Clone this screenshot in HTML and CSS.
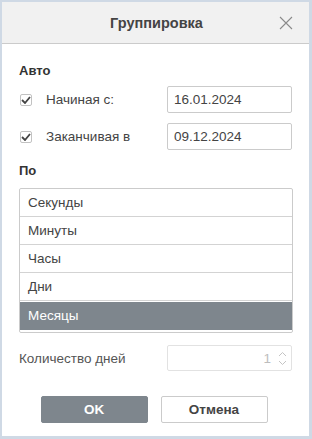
FILE: index.html
```html
<!DOCTYPE html>
<html lang="ru">
  <head>
    <meta charset="UTF-8" />
    <title>Группировка</title>
    <link rel="stylesheet" href="styles.css">
  </head>
  <body>
    <div class="dialog">
      <!-- Header -->
      <div class="dialog-header">
        <span class="dialog-title">Группировка</span>
        <span class="close-btn">
          <svg width="14" height="14" viewBox="0 0 14 14">
            <path d="M1 1 L13 13 M13 1 L1 13" stroke="#8a8a8a" stroke-width="1.1" fill="none" />
          </svg>
        </span>
      </div>

      <div class="dialog-body">
        <div class="section-title">Авто</div>

        <div class="field-row">
          <label class="check">
            <span class="checkbox">
              <svg width="10" height="8" viewBox="0 0 10 8">
                <path d="M1 4 L4 7 L9 1" stroke="#444" stroke-width="1.8" fill="none" />
              </svg>
            </span>
            Начиная с:
          </label>
          <input class="text-input" type="text" value="16.01.2024" />
        </div>

        <div class="field-row">
          <label class="check">
            <span class="checkbox">
              <svg width="10" height="8" viewBox="0 0 10 8">
                <path d="M1 4 L4 7 L9 1" stroke="#444" stroke-width="1.8" fill="none" />
              </svg>
            </span>
            Заканчивая в
          </label>
          <input class="text-input" type="text" value="09.12.2024" />
        </div>

        <div class="section-title by-title">По</div>

        <ul class="list">
          <li>Секунды</li>
          <li>Минуты</li>
          <li>Часы</li>
          <li>Дни</li>
          <li class="selected">Месяцы</li>
        </ul>

        <div class="field-row days-row">
          <span class="days-label">Количество дней</span>
          <div class="spinner">
            <span class="spinner-value">1</span>
            <span class="spinner-arrows">
              <svg width="9" height="6" viewBox="0 0 9 6">
                <path d="M1 5 L4.5 1.5 L8 5" stroke="#c4c4c4" stroke-width="1" fill="none" />
              </svg>
              <svg width="9" height="6" viewBox="0 0 9 6">
                <path d="M1 1 L4.5 4.5 L8 1" stroke="#c4c4c4" stroke-width="1" fill="none" />
              </svg>
            </span>
          </div>
        </div>

        <div class="buttons">
          <button class="btn btn-primary">OK</button>
          <button class="btn">Отмена</button>
        </div>
      </div>
    </div>
  </body>
</html>
```

FILE: styles.css
```css
/* Global Styles */
* {
  margin: 0;
  padding: 0;
  box-sizing: border-box;
}

body {
  font-family: "Liberation Sans", Arial, sans-serif;
  font-size: 13.5px;
  color: #444;
  background: #cfd9e5;
  width: 312px;
  height: 439px;
  padding: 2px 3px 3px 2px;
}

/* Dialog */
.dialog {
  background: white;
  width: 307px;
  height: 434px;
  display: flex;
  flex-direction: column;
}

.dialog-header {
  height: 42px;
  background: #f1f1f1;
  border-bottom: 1px solid #cbcbcb;
  display: flex;
  align-items: center;
  justify-content: center;
  position: relative;
}

.dialog-title {
  font-size: 14.5px;
  font-weight: bold;
  color: #444;
  margin-left: 2px;
}

.close-btn {
  position: absolute;
  right: 16px;
  top: 14px;
  display: flex;
}

.dialog-body {
  padding: 19px 17px 0 17px;
}

.section-title {
  font-weight: bold;
  font-size: 13px;
  color: #333;
  margin-bottom: 8px;
}

.by-title {
  margin-top: 13px;
  margin-bottom: 10px;
}

/* Rows */
.field-row {
  display: flex;
  align-items: center;
  justify-content: space-between;
  margin-bottom: 10px;
}

.check {
  display: flex;
  align-items: center;
  gap: 14px;
  padding-left: 1px;
}

.checkbox {
  width: 12px;
  height: 12px;
  border: 1px solid #c2c2c2;
  border-radius: 2px;
  display: flex;
  align-items: center;
  justify-content: center;
}

.text-input {
  width: 125px;
  height: 27px;
  border: 1px solid #cbcbcb;
  border-radius: 2px;
  padding: 0 6px;
  font-family: inherit;
  font-size: 13.5px;
  color: #444;
  outline: none;
}

/* List */
.list {
  list-style: none;
  border: 1px solid #cbcbcb;
  border-radius: 2px;
  width: 274px;
  padding-bottom: 2px;
  margin-bottom: 12px;
}

.list li {
  height: 28px;
  line-height: 27px;
  padding-left: 8px;
  border-bottom: 1px solid #d3d3d3;
}

.list li.selected {
  background: #7e868d;
  color: white;
  border-bottom: none;
  margin-top: 1px;
}

/* Days */
.days-row {
  margin-bottom: 0;
}

.days-label {
  color: #555;
}

.spinner {
  width: 125px;
  height: 26px;
  border: 1px solid #e2e2e2;
  border-radius: 2px;
  display: flex;
  align-items: center;
  justify-content: flex-end;
  padding-right: 4px;
}

.spinner-value {
  color: #bdbdbd;
  margin-right: 7px;
}

.spinner-arrows {
  display: flex;
  flex-direction: column;
  gap: 3px;
}

/* Buttons */
.buttons {
  display: flex;
  justify-content: center;
  gap: 13px;
  margin-top: 25px;
  padding-right: 3px;
}

.btn {
  width: 107px;
  height: 27px;
  border: 1px solid #cbcbcb;
  border-radius: 2px;
  background: white;
  font-family: inherit;
  font-size: 13.5px;
  font-weight: bold;
  color: #444;
}

.btn-primary {
  background: #7e868d;
  border-color: #7e868d;
  color: white;
}
```
